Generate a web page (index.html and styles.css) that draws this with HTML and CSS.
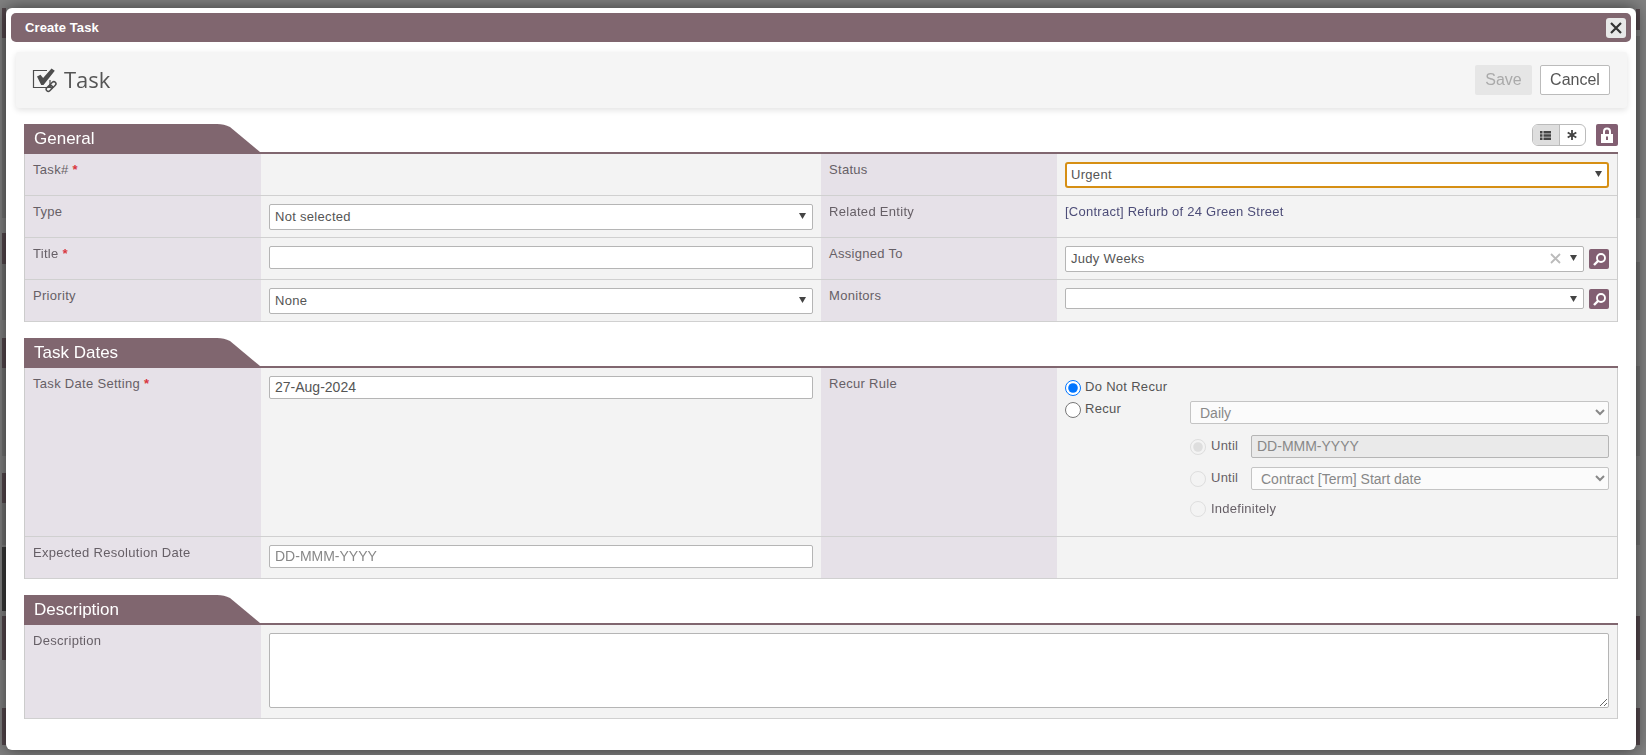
FILE: index.html
```html
<!DOCTYPE html>
<html lang="en">
<head>
<meta charset="utf-8">
<title>Create Task</title>
<link rel="stylesheet" href="styles.css">
</head>
<body>
<div class="backdrop">
  <i class="bar l1"></i><i class="bar l2"></i><i class="bar l3"></i><i class="bar l4"></i><i class="bar l5"></i><i class="bar l6"></i><i class="bar l7"></i>
  <i class="bar r1"></i><i class="bar r2"></i><i class="bar r3"></i>
  <i class="box b1"></i><i class="box b2"></i><i class="box b3"></i><i class="box b4"></i>
  <i class="box c1"></i><i class="box c2"></i><i class="box c3"></i><i class="box c4"></i>
</div>
<main class="modal">
  <header class="titlebar">
    <span class="titlebar-text">Create Task</span>
    <button class="close" type="button" aria-label="Close">
      <svg width="12" height="12" viewBox="0 0 12 12"><path d="M1 1l10 10M11 1L1 11" stroke="#333" stroke-width="2.200" fill="none"/></svg>
    </button>
  </header>

  <section class="toolbar">
    <svg class="task-icon" width="26" height="26" viewBox="0 0 26 26">
      <path d="M18 13v7.500H1.500V3.500H15" fill="none" stroke="#4d4d4d" stroke-width="1.200"/>
      <path d="M5 9.500l3.500-1.800 2.600 3.300L19.500 1.500l3.300 2.300L11.500 18h-2.300z" fill="#4d4d4d"/>
      <g fill="none" stroke="#4d4d4d" stroke-width="1.500" transform="rotate(-45 19 19.500)">
        <rect x="13" y="17.500" width="7" height="4.200" rx="2.100"/>
        <rect x="18" y="17.500" width="7" height="4.200" rx="2.100"/>
      </g>
    </svg>
    <h1 class="toolbar-title">Task</h1>
    <div class="toolbar-actions">
      <button class="btn btn-disabled" type="button">Save</button>
      <button class="btn btn-cancel" type="button">Cancel</button>
    </div>
  </section>

  <section class="section section-first">
    <div class="section-head">
      <div class="tab">
        <svg class="tab-shape" width="236" height="28" viewBox="0 0 236 28"><path d="M0 0H193C198 0 202 1 206 3L236 28H0z" fill="#80666f"/></svg>
        <span class="tab-text">General</span>
      </div>
      <div class="head-tools">
        <div class="toggle">
          <span class="toggle-item is-on">
            <svg width="11" height="9" viewBox="0 0 11 9"><path d="M0 0h2.500v2.400H0zM3.500 0H11v2.400H3.500zM0 3.300h2.500v2.400H0zM3.500 3.300H11v2.400H3.500zM0 6.600h2.500V9H0zM3.500 6.600H11V9H3.500z" fill="#444"/></svg>
          </span>
          <span class="toggle-item">
            <svg width="10" height="10" viewBox="0 0 10 10"><path d="M5 0v10M.7 2.500l8.600 5M9.300 2.500l-8.600 5" stroke="#444" stroke-width="1.800" fill="none"/></svg>
          </span>
        </div>
        <span class="lock">
          <svg width="14" height="16" viewBox="0 0 14 16"><path d="M3 7V4.500a4 4 0 0 1 8 0V7H9V4.500a2 2 0 0 0-4 0V7z" fill="#fff"/><path d="M1 7h12v9H1z" fill="#fff"/><path d="M6 9.500h2v3.500H6z" fill="#825f72"/></svg>
        </span>
      </div>
    </div>
    <div class="grid">
      <div class="label">Task# <b class="req">*</b></div>
      <div class="value"></div>
      <div class="label">Status</div>
      <div class="value">
        <div class="combo combo-focus"><span>Urgent</span><svg class="caret" width="7" height="6" viewBox="0 0 7 6"><path d="M0 0h7L3.500 6z"/></svg></div>
      </div>

      <div class="label">Type</div>
      <div class="value">
        <div class="combo"><span>Not selected</span><svg class="caret" width="7" height="6" viewBox="0 0 7 6"><path d="M0 0h7L3.500 6z"/></svg></div>
      </div>
      <div class="label">Related Entity</div>
      <div class="value value-text">[Contract] Refurb of 24 Green Street</div>

      <div class="label">Title <b class="req">*</b></div>
      <div class="value"><input class="input" type="text"></div>
      <div class="label">Assigned To</div>
      <div class="value value-picker">
        <div class="combo combo-grow"><span>Judy Weeks</span>
          <svg class="clear" width="11" height="11" viewBox="0 0 11 11"><path d="M1 1l9 9M10 1l-9 9" stroke="#bbb" stroke-width="1.800" fill="none"/></svg>
          <svg class="caret" width="7" height="6" viewBox="0 0 7 6"><path d="M0 0h7L3.500 6z"/></svg></div>
        <span class="search"><svg width="15" height="15" viewBox="0 0 15 15"><circle cx="9" cy="6" r="4" fill="none" stroke="#fff" stroke-width="1.900"/><path d="M6 9l-4 4" stroke="#fff" stroke-width="2.400"/></svg></span>
      </div>

      <div class="label">Priority</div>
      <div class="value">
        <div class="combo"><span>None</span><svg class="caret" width="7" height="6" viewBox="0 0 7 6"><path d="M0 0h7L3.500 6z"/></svg></div>
      </div>
      <div class="label">Monitors</div>
      <div class="value value-picker">
        <div class="combo combo-grow combo-short"><span></span><svg class="caret" width="7" height="6" viewBox="0 0 7 6"><path d="M0 0h7L3.500 6z"/></svg></div>
        <span class="search"><svg width="15" height="15" viewBox="0 0 15 15"><circle cx="9" cy="6" r="4" fill="none" stroke="#fff" stroke-width="1.900"/><path d="M6 9l-4 4" stroke="#fff" stroke-width="2.400"/></svg></span>
      </div>
    </div>
  </section>

  <section class="section">
    <div class="section-head">
      <div class="tab">
        <svg class="tab-shape" width="236" height="28" viewBox="0 0 236 28"><path d="M0 0H193C198 0 202 1 206 3L236 28H0z" fill="#80666f"/></svg>
        <span class="tab-text">Task Dates</span>
      </div>
    </div>
    <div class="grid grid-dates">
      <div class="label">Task Date Setting <b class="req">*</b></div>
      <div class="value"><input class="input" type="text" value="27-Aug-2024"></div>
      <div class="label">Recur Rule</div>
      <div class="value recur">
        <label class="radio radio-main"><input type="radio" name="recur" checked><span>Do Not Recur</span></label>
        <div class="recur-row">
          <label class="radio radio-main radio-recur"><input type="radio" name="recur"><span>Recur</span></label>
          <select class="native native-daily" disabled><option>Daily</option></select>
        </div>
        <div class="recur-sub recur-sub-first">
          <label class="radio radio-sub"><input type="radio" name="until" checked disabled><span>Until</span></label>
          <input class="input input-disabled" type="text" placeholder="DD-MMM-YYYY" disabled>
        </div>
        <div class="recur-sub">
          <label class="radio radio-sub"><input type="radio" name="until" disabled><span>Until</span></label>
          <select class="native" disabled><option>Contract [Term] Start date</option></select>
        </div>
        <div class="recur-sub recur-last">
          <label class="radio radio-sub"><input type="radio" name="until" disabled><span>Indefinitely</span></label>
        </div>
      </div>

      <div class="label">Expected Resolution Date</div>
      <div class="value"><input class="input" type="text" placeholder="DD-MMM-YYYY"></div>
      <div class="label"></div>
      <div class="value"></div>
    </div>
  </section>

  <section class="section">
    <div class="section-head">
      <div class="tab">
        <svg class="tab-shape" width="236" height="28" viewBox="0 0 236 28"><path d="M0 0H193C198 0 202 1 206 3L236 28H0z" fill="#80666f"/></svg>
        <span class="tab-text">Description</span>
      </div>
    </div>
    <div class="grid grid-two">
      <div class="label">Description</div>
      <div class="value"><textarea class="textarea"></textarea></div>
    </div>
  </section>
</main>
</body>
</html>
```
FILE: styles.css
```css
* { box-sizing: border-box; }
html, body { height: 100%; }
body {
  margin: 0;
  padding: 8px 10px 5px 6px;
  background: #808080;
  font-family: "Liberation Sans", Arial, sans-serif;
  font-size: 13px;
  color: #665f66;
  overflow: hidden;
}

/* dimmed page behind the dialog */
.backdrop { position: fixed; inset: 0; background: #808080; }
.bar { position: absolute; width: 4px; background: #54474c; }
.l1 { left: 2px; top: 8px; height: 30px; }
.l2 { left: 2px; top: 233px; height: 31px; }
.l3 { left: 2px; top: 338px; height: 30px; }
.l4 { left: 2px; top: 473px; height: 30px; }
.l5 { left: 2px; top: 547px; height: 64px; background: #383838; }
.l6 { left: 2px; top: 616px; height: 44px; }
.l7 { left: 2px; top: 708px; height: 37px; }
.r1 { left: 1636px; top: 9px; height: 21px; }
.r2 { left: 1636px; top: 616px; height: 44px; }
.r3 { left: 1636px; top: 708px; height: 37px; }
.box { position: absolute; width: 4px; background: #727272; }
.b1 { left: 2px; top: 38px; height: 180px; }
.b2 { left: 2px; top: 264px; height: 56px; }
.b3 { left: 2px; top: 368px; height: 88px; }
.b4 { left: 2px; top: 503px; height: 42px; }
.c1 { left: 1636px; top: 36px; height: 182px; }
.c2 { left: 1636px; top: 262px; height: 58px; }
.c3 { left: 1636px; top: 366px; height: 90px; }
.c4 { left: 1636px; top: 500px; height: 45px; }

/* dialog */
.modal {
  position: relative;
  width: 1630px;
  height: 742px;
  padding: 5px;
  background: #fff;
  border-radius: 6px;
  box-shadow: 0 0 16px rgba(0, 0, 0, .55);
}
.titlebar {
  display: flex;
  align-items: center;
  justify-content: space-between;
  height: 29px;
  padding: 0 5px 0 14px;
  background: #80666f;
  border-radius: 5px;
}
.titlebar-text {
  font: bold 13px "Liberation Sans", sans-serif;
  letter-spacing: .1px;
  color: #fff;
}
.close {
  display: flex;
  align-items: center;
  justify-content: center;
  width: 20px;
  height: 20px;
  padding: 0;
  border: 0;
  border-radius: 3px;
  background: #e8e8e8;
}

.toolbar {
  display: flex;
  align-items: center;
  height: 56px;
  margin: 10px 4px 0 5px;
  padding: 0 17px 0 16px;
  background: #f5f5f5;
  border-radius: 3px;
  box-shadow: 0 2px 6px rgba(0, 0, 0, .12);
}
.task-icon { flex: none; }
.toolbar-title {
  margin: -2px 0 0 6px;
  font: 400 22px "Open Sans", sans-serif;
  color: #555;
}
.toolbar-actions { display: flex; gap: 8px; margin-left: auto; }
.btn {
  height: 30px;
  border-radius: 2px;
  font: 16px "Liberation Sans", sans-serif;
  padding: 0;
}
.btn-disabled { width: 57px; background: #e6e6e6; border: 0; color: #aaa; }
.btn-cancel { width: 70px; background: #fff; border: 1px solid #bbb; color: #555; }

/* sections */
.section { margin: 16px 13px 0 13px; }
.section-head {
  display: flex;
  align-items: flex-start;
  justify-content: space-between;
  height: 30px;
  border-bottom: 2px solid #80666f;
}
.tab {
  position: relative;
  width: 236px;
  height: 28px;
  padding: 1px 0 0 10px;
}
.tab-shape { position: absolute; left: 0; top: 0; }
.tab-text {
  position: relative;
  font: 17px/28px "Liberation Sans", sans-serif;
  color: #fff;
}
.head-tools { display: flex; align-items: center; gap: 10px; }
.toggle {
  display: flex;
  width: 54px;
  height: 22px;
  border: 1px solid #bbb;
  border-radius: 6px;
  overflow: hidden;
  background: #fff;
}
.toggle-item { flex: 1; display: flex; align-items: center; justify-content: center; }
.toggle-item.is-on { background: #dedede; border-right: 1px solid #bbb; }
.lock {
  display: flex;
  align-items: center;
  justify-content: center;
  width: 22px;
  height: 22px;
  background: #825f72;
  border-radius: 2px;
}

.grid {
  display: grid;
  grid-template-columns: 236px 560px 236px 1fr;
  grid-auto-rows: 42px;
  border-left: 1px solid #ccc;
  border-right: 1px solid #ccc;
}
.grid-dates { grid-template-rows: 169px 42px; }
.grid-two { grid-template-columns: 236px 1fr; grid-auto-rows: 94px; }
.label, .value { border-bottom: 1px solid #d0d0d0; }
.label {
  padding: 7px 8px;
  line-height: 18px;
  background: #e6e1e8;
  letter-spacing: .3px;
}
.value { padding: 8px; background: #f3f3f3; }
.req { color: #d9363e; font-weight: 700; letter-spacing: 0; }
.value-text { padding-top: 7px; line-height: 18px; color: #4d4d78; letter-spacing: .25px; }
.value-picker { display: flex; align-items: flex-start; gap: 5px; }

.combo {
  display: flex;
  align-items: center;
  height: 26px;
  padding: 0 5px 2px;
  background: #fff;
  border: 1px solid #b5b5b5;
  border-radius: 2px;
  color: #555;
  letter-spacing: .3px;
}
.combo > span { flex: 1; }
.combo-focus { border: 2px solid #d68f14; border-radius: 3px; padding: 0 4px 2px; }
.combo-grow { flex: 1; }
.combo-short { height: 21px; padding-bottom: 0; }
.caret { flex: none; fill: #444; margin-right: 1px; }
.clear { flex: none; margin-right: 9px; }
.search {
  display: flex;
  align-items: center;
  justify-content: center;
  flex: none;
  width: 20px;
  height: 20px;
  margin-top: 3px;
  background: #825f72;
  border-radius: 2px;
}
.combo-short + .search { margin-top: 1px; }

.input {
  display: block;
  width: 100%;
  height: 23px;
  padding: 0 5px 1px;
  background: #fff;
  border: 1px solid #b5b5b5;
  border-radius: 2px;
  font: 14px "Liberation Sans", sans-serif;
  color: #555;
}
.input::placeholder { color: #888; opacity: 1; }
.input-disabled { flex: 1; width: auto; background: #eaeaea; }
.textarea {
  display: block;
  width: 100%;
  height: 75px;
  background: #fff;
  border: 1px solid #b5b5b5;
  border-radius: 2px;
}

.recur { padding: 8px 8px 0; }
.radio { display: flex; align-items: center; gap: 4px; line-height: 16px; }
.radio input { width: 16px; height: 16px; margin: 0; flex: none; }
.radio span { margin-top: -2px; }
.radio-main { height: 23px; color: #555; letter-spacing: .3px; }
.recur-row { display: flex; align-items: flex-start; }
.radio-recur { width: 125px; height: 22px; }
.native {
  flex: 1;
  width: 100%;
  height: 23px;
  padding: 0 5px;
  background: #fbfbfb;
  border: 1px solid #c4c4c4;
  border-radius: 2px;
  font: 14px "Liberation Sans", sans-serif;
  color: #888;
  opacity: 1;
}
.native-daily { margin-top: 2px; }
.recur-sub { display: flex; align-items: center; margin: 9px 0 0 125px; }
.recur-sub-first { margin-top: 11px; }
.recur-last { margin-top: 7px; height: 23px; }
.recur-last .radio span { margin-top: 0; }
.radio-sub { width: 61px; gap: 5px; color: #665f66; letter-spacing: .25px; white-space: nowrap; }
.radio-sub input { opacity: .55; }
```
